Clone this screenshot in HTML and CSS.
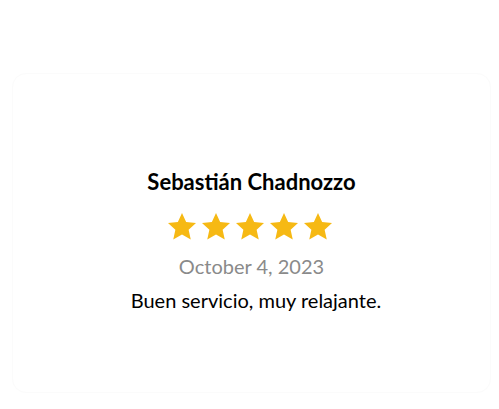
FILE: index.html
```html
<!DOCTYPE html>
<html lang="es">
<head>
<meta charset="utf-8">
<link rel="stylesheet" href="styles.css">
</head>
<body>
<div class="card">
  <h2 class="name">Sebastián Chadnozzo</h2>
  <div class="stars">
    <svg class="star" viewBox="0 0 24 24"><path d="M12 0.8l3.3 7.2 7.9.8-5.9 5.3 1.7 7.9L12 18l-7 4 1.7-7.9-5.9-5.3 7.9-.8z"/></svg>
    <svg class="star" viewBox="0 0 24 24"><path d="M12 0.8l3.3 7.2 7.9.8-5.9 5.3 1.7 7.9L12 18l-7 4 1.7-7.9-5.9-5.3 7.9-.8z"/></svg>
    <svg class="star" viewBox="0 0 24 24"><path d="M12 0.8l3.3 7.2 7.9.8-5.9 5.3 1.7 7.9L12 18l-7 4 1.7-7.9-5.9-5.3 7.9-.8z"/></svg>
    <svg class="star" viewBox="0 0 24 24"><path d="M12 0.8l3.3 7.2 7.9.8-5.9 5.3 1.7 7.9L12 18l-7 4 1.7-7.9-5.9-5.3 7.9-.8z"/></svg>
    <svg class="star" viewBox="0 0 24 24"><path d="M12 0.8l3.3 7.2 7.9.8-5.9 5.3 1.7 7.9L12 18l-7 4 1.7-7.9-5.9-5.3 7.9-.8z"/></svg>
  </div>
  <p class="date">October 4, 2023</p>
  <p class="comment">Buen servicio, muy relajante.</p>
</div>
</body>
</html>
```
FILE: styles.css
```css
html, body {
  margin: 0;
  background: #ffffff;
}
body {
  padding: 73px 8px 16px 12px;
  font-family: Lato, "Liberation Sans", sans-serif;
}
.card {
  height: 320px;
  box-sizing: border-box;
  border: 1px solid #fbfbfb;
  border-radius: 14px;
  display: flex;
  flex-direction: column;
  align-items: center;
  padding-top: 94px;
}
.name {
  margin: 0;
  font-size: 22px;
  font-weight: 700;
  color: #000;
  line-height: 28px;
}
.stars {
  display: flex;
  gap: 4px;
  margin: 16px 4px 0 0;
}
.star {
  width: 30px;
  height: 30px;
  fill: #f6b914;
}
.date {
  margin: 11px 0 0;
  font-size: 20px;
  line-height: 26px;
  color: #8a8a8a;
}
.comment {
  margin: 8px 0 0;
  padding-left: 9px;
  font-size: 20px;
  line-height: 26px;
  color: #000;
}
```
